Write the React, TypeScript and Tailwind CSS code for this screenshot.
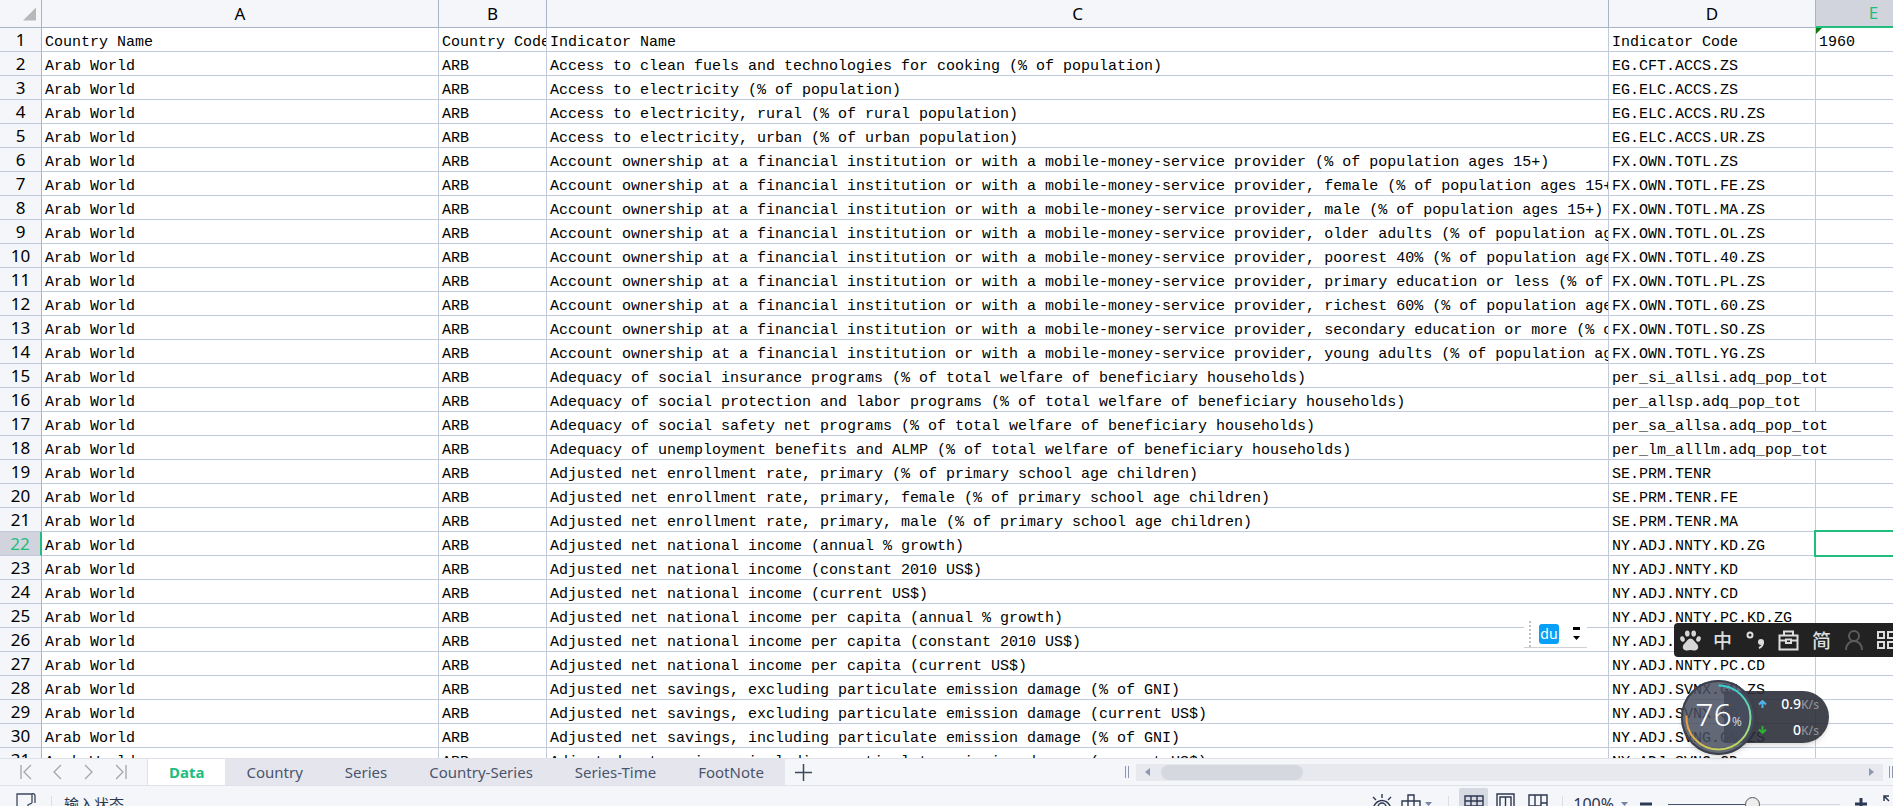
import { Fragment } from "react";

type Row = { name: string; code: string };

const rows: Row[] = [
  { name: "Access to clean fuels and technologies for cooking (% of population)", code: "EG.CFT.ACCS.ZS" },
  { name: "Access to electricity (% of population)", code: "EG.ELC.ACCS.ZS" },
  { name: "Access to electricity, rural (% of rural population)", code: "EG.ELC.ACCS.RU.ZS" },
  { name: "Access to electricity, urban (% of urban population)", code: "EG.ELC.ACCS.UR.ZS" },
  { name: "Account ownership at a financial institution or with a mobile-money-service provider (% of population ages 15+)", code: "FX.OWN.TOTL.ZS" },
  { name: "Account ownership at a financial institution or with a mobile-money-service provider, female (% of population ages 15+)", code: "FX.OWN.TOTL.FE.ZS" },
  { name: "Account ownership at a financial institution or with a mobile-money-service provider, male (% of population ages 15+)", code: "FX.OWN.TOTL.MA.ZS" },
  { name: "Account ownership at a financial institution or with a mobile-money-service provider, older adults (% of population ages 25+)", code: "FX.OWN.TOTL.OL.ZS" },
  { name: "Account ownership at a financial institution or with a mobile-money-service provider, poorest 40% (% of population ages 15+)", code: "FX.OWN.TOTL.40.ZS" },
  { name: "Account ownership at a financial institution or with a mobile-money-service provider, primary education or less (% of population ages 15+)", code: "FX.OWN.TOTL.PL.ZS" },
  { name: "Account ownership at a financial institution or with a mobile-money-service provider, richest 60% (% of population ages 15+)", code: "FX.OWN.TOTL.60.ZS" },
  { name: "Account ownership at a financial institution or with a mobile-money-service provider, secondary education or more (% of population ages 15+)", code: "FX.OWN.TOTL.SO.ZS" },
  { name: "Account ownership at a financial institution or with a mobile-money-service provider, young adults (% of population ages 15-24)", code: "FX.OWN.TOTL.YG.ZS" },
  { name: "Adequacy of social insurance programs (% of total welfare of beneficiary households)", code: "per_si_allsi.adq_pop_tot" },
  { name: "Adequacy of social protection and labor programs (% of total welfare of beneficiary households)", code: "per_allsp.adq_pop_tot" },
  { name: "Adequacy of social safety net programs (% of total welfare of beneficiary households)", code: "per_sa_allsa.adq_pop_tot" },
  { name: "Adequacy of unemployment benefits and ALMP (% of total welfare of beneficiary households)", code: "per_lm_alllm.adq_pop_tot" },
  { name: "Adjusted net enrollment rate, primary (% of primary school age children)", code: "SE.PRM.TENR" },
  { name: "Adjusted net enrollment rate, primary, female (% of primary school age children)", code: "SE.PRM.TENR.FE" },
  { name: "Adjusted net enrollment rate, primary, male (% of primary school age children)", code: "SE.PRM.TENR.MA" },
  { name: "Adjusted net national income (annual % growth)", code: "NY.ADJ.NNTY.KD.ZG" },
  { name: "Adjusted net national income (constant 2010 US$)", code: "NY.ADJ.NNTY.KD" },
  { name: "Adjusted net national income (current US$)", code: "NY.ADJ.NNTY.CD" },
  { name: "Adjusted net national income per capita (annual % growth)", code: "NY.ADJ.NNTY.PC.KD.ZG" },
  { name: "Adjusted net national income per capita (constant 2010 US$)", code: "NY.ADJ.NNTY.PC.KD" },
  { name: "Adjusted net national income per capita (current US$)", code: "NY.ADJ.NNTY.PC.CD" },
  { name: "Adjusted net savings, excluding particulate emission damage (% of GNI)", code: "NY.ADJ.SVNX.GN.ZS" },
  { name: "Adjusted net savings, excluding particulate emission damage (current US$)", code: "NY.ADJ.SVNX.CD" },
  { name: "Adjusted net savings, including particulate emission damage (% of GNI)", code: "NY.ADJ.SVNG.GN.ZS" },
  { name: "Adjusted net savings, including particulate emission damage (current US$)", code: "NY.ADJ.SVNG.CD" },
];

const sheets = ["Data", "Country", "Series", "Country-Series", "Series-Time", "FootNote"];

const ACTIVE_ROW = 22;

const cell = "h-6 overflow-hidden whitespace-pre border-r border-b border-[#c3c9dc] p-0 pt-[6px] pl-[3px] text-left align-top font-normal leading-[17px]";

function ColumnHead({ letter, active }: { letter: string; active?: boolean }) {
  return (
    <th
      scope="col"
      className={
        active
          ? "h-7 border-b-2 border-[#21bd7e] bg-[#d1d4dd] p-0 text-center text-[17px] leading-6 font-normal text-[#21bd7e]"
          : "h-7 border-r border-b border-[#a9b3c9] p-0 text-center text-[17px] leading-6 font-normal"
      }
    >
      {letter}
    </th>
  );
}

function RowHead({ n }: { n: number }) {
  return (
    <th
      scope="row"
      className={
        n === ACTIVE_ROW
          ? "h-6 border-r-2 border-b border-r-[#21bd7e] border-b-[#c3c9dc] bg-[#d1d4dd] p-0 text-center align-top font-['Noto_Sans'] text-[17px] leading-[23px] font-normal text-[#21bd7e]"
          : "h-6 border-r border-b border-r-[#a9b3c9] border-b-[#c3c9dc] bg-[#f5f6f9] p-0 text-center align-top font-['Noto_Sans'] text-[17px] leading-[23px] font-normal"
      }
    >
      {n}
    </th>
  );
}

function Sheet() {
  return (
    <table className="w-[1931px] table-fixed border-separate border-spacing-0 font-['Liberation_Mono',monospace] text-[15px] text-black">
      <colgroup>
        <col className="w-[42px]" />
        <col className="w-[397px]" />
        <col className="w-[108px]" />
        <col className="w-[1062px]" />
        <col className="w-[207px]" />
        <col className="w-[115px]" />
      </colgroup>
      <thead className="bg-[#f5f6f9] font-['Noto_Sans',sans-serif]">
        <tr>
          <th className="h-7 border-r border-b border-[#a9b3c9] p-0">
            <button type="button" aria-label="Select all" className="flex w-full justify-end pr-[5px]">
              <svg width="13" height="14" viewBox="0 0 14 14">
                <path d="M14 0V14H0Z" fill="#b8b8b8" />
              </svg>
            </button>
          </th>
          <ColumnHead letter="A" />
          <ColumnHead letter="B" />
          <ColumnHead letter="C" />
          <ColumnHead letter="D" />
          <ColumnHead letter="E" active />
        </tr>
      </thead>
      <tbody>
        <tr>
          <RowHead n={1} />
          <td className={cell}>Country Name</td>
          <td className={cell}>Country Code</td>
          <td className={cell}>Indicator Name</td>
          <td className={cell}>Indicator Code</td>
          <td className={`${cell} relative`}>
            <svg className="absolute top-0 left-0" width="6" height="6" viewBox="0 0 6 6">
              <path d="M0 0H6L0 6Z" fill="#0a7d0a" />
            </svg>
            1960
          </td>
        </tr>
        {rows.map((row, i) => {
          const n = i + 2;
          // long codes run over into the empty cell on their right
          const spills = row.code.length > 22;
          return (
            <tr key={row.name}>
              <RowHead n={n} />
              <td className={cell}>Arab World</td>
              <td className={cell}>ARB</td>
              <td className={cell}>{row.name}</td>
              {spills ? (
                <td colSpan={2} className={cell}>{row.code}</td>
              ) : (
                <Fragment>
                  <td className={cell}>{row.code}</td>
                  <td className={`${cell} relative overflow-visible`}>
                    {n === ACTIVE_ROW && (
                      <div className="absolute -top-[2px] -right-px -bottom-[2px] -left-[2px] border-2 border-[#21bd7e]" />
                    )}
                  </td>
                </Fragment>
              )}
            </tr>
          );
        })}
      </tbody>
    </table>
  );
}

const navPaths = [
  { label: "First sheet", d: "M1 1V15M11 1L4 8L11 15" },
  { label: "Previous sheet", d: "M9 1L2 8L9 15" },
  { label: "Next sheet", d: "M1 1L8 8L1 15" },
  { label: "Last sheet", d: "M0 1L7 8L0 15M10 1V15" },
];

function TabBar() {
  return (
    <div className="flex h-7 shrink-0 border-t border-b border-[#e0e2e9] bg-[#f5f6f9] font-['Noto_Sans',sans-serif] text-[15px] text-[#4a546c]">
      <nav className="flex w-[148px] shrink-0 items-center gap-5 border-r border-[#e0e2e9] pl-5">
        {navPaths.map((p) => (
          <button key={p.label} type="button" aria-label={p.label}>
            <svg width="12" height="16" viewBox="0 0 12 16" fill="none" stroke="#a3a5aa" strokeWidth="1.3">
              <path d={p.d} />
            </svg>
          </button>
        ))}
      </nav>
      {sheets.map((s) => (
        <button
          key={s}
          type="button"
          className={
            s === "Data"
              ? "bg-white px-[21px] font-bold text-[#21bd7e]"
              : "bg-[#e5e6ed] px-[21px]"
          }
        >
          {s}
        </button>
      ))}
      <button type="button" aria-label="Add sheet" className="px-[10px]">
        <svg width="17" height="17" viewBox="0 0 17 17" stroke="#3d475e" strokeWidth="1.5">
          <path d="M8.5 0V17M0 8.5H17" />
        </svg>
      </button>
      <div className="ml-auto flex w-[768px] shrink-0 items-center">
        <Grip />
        <div className="ml-[7px] flex h-[17px] flex-1 items-center bg-[#e8e9ef]">
          <button type="button" aria-label="Scroll left" className="pl-[9px]">
            <svg width="5" height="8" viewBox="0 0 5 8"><path d="M5 0V8L0 4Z" fill="#8d98b3" /></svg>
          </button>
          <div className="ml-[11px] h-[15px] w-[142px] rounded-full bg-[#d6d8e0]" />
          <button type="button" aria-label="Scroll right" className="ml-auto pr-[9px]">
            <svg width="5" height="8" viewBox="0 0 5 8"><path d="M0 0V8L5 4Z" fill="#8d98b3" /></svg>
          </button>
        </div>
        <div className="ml-[6px]">
          <Grip />
        </div>
      </div>
    </div>
  );
}

function Grip() {
  return <div className="h-3 w-1 border-x border-[#8d98b3]" />;
}

function Caret() {
  return (
    <svg width="7" height="4" viewBox="0 0 7 4"><path d="M0 0H7L3.5 4Z" fill="#7683a3" /></svg>
  );
}

function StatusBar() {
  return (
    <footer className="h-5 shrink-0 overflow-hidden bg-[#f5f6f9]">
      <div className="flex h-9 items-center text-[#2d3750]">
        <svg className="ml-4" width="20" height="22" viewBox="0 0 20 22" fill="none" stroke="#3d475e" strokeWidth="1.3">
          <path d="M10 15H1V1H16M16 10V1C17 0 19 1 19 3V10M12 16V12L16 10" />
        </svg>
        <div className="ml-[15px] h-4 w-px bg-[#dcdee5]" />
        <span className="ml-3 font-['Noto_Sans_CJK_SC',sans-serif] text-[15px] leading-5">输入状态</span>
        <div className="ml-auto flex items-center">
          <button type="button" aria-label="Eye protection">
            <svg width="20" height="20" viewBox="0 0 20 20" fill="none" stroke="#2d3750" strokeWidth="1.4">
              <path d="M1 14C5 4 15 4 19 14C15 20 5 20 1 14ZM10 4V0M4 6L1 3M16 6L19 3" />
              <circle cx="10" cy="13" r="4" />
            </svg>
          </button>
          <button type="button" aria-label="Reading mode" className="ml-[9px] flex items-center gap-1">
            <svg width="20" height="20" viewBox="0 0 20 20" fill="none" stroke="#2d3750" strokeWidth="1.4">
              <path d="M7 1H13V18H7ZM1 7H19V13H1Z" />
            </svg>
            <Caret />
          </button>
          <div className="ml-4 h-4 w-px bg-[#dcdee5]" />
          <button type="button" aria-label="Normal view" className="ml-[10px] flex h-8 w-[29px] items-center justify-center rounded-xs bg-[#d7dae3]">
            <svg width="20" height="18" viewBox="0 0 20 18" fill="none" stroke="#2d3750" strokeWidth="1.4">
              <path d="M1 1H19V17H1ZM1 6H19M1 11H19M7 1V17M13 1V17" />
            </svg>
          </button>
          <button type="button" aria-label="Page layout" className="ml-2">
            <svg width="19" height="22" viewBox="0 0 19 22" fill="none" stroke="#2d3750" strokeWidth="1.4">
              <path d="M1 21V1H18V21ZM4 21V4H15V21M9.5 4V21" />
            </svg>
          </button>
          <button type="button" aria-label="Page break preview" className="ml-[13px]">
            <svg width="20" height="20" viewBox="0 0 20 20" fill="none" stroke="#2d3750" strokeWidth="1.4">
              <path d="M1 19V1H19V19ZM7 1V12M13 1V12M1 12H13M13 9H19" />
            </svg>
          </button>
          <div className="ml-[14px] h-4 w-px bg-[#dcdee5]" />
          <button type="button" className="ml-[10px] flex items-center gap-[7px] font-['Noto_Sans',sans-serif] text-[16px] leading-5">
            100%
            <Caret />
          </button>
          <button type="button" aria-label="Zoom out" className="ml-3">
            <svg width="12" height="12" viewBox="0 0 12 12" stroke="#2d3a57" strokeWidth="3"><path d="M0 6H12" /></svg>
          </button>
          <input
            type="range"
            aria-label="Zoom"
            defaultValue={49}
            className="ml-4 h-[15px] w-[172px] appearance-none bg-[linear-gradient(#46536e,#46536e),linear-gradient(#d3d6de,#d3d6de)] bg-[length:50%_1px,100%_1px] bg-[position:left_center,center] bg-no-repeat [&::-webkit-slider-thumb]:size-[15px] [&::-webkit-slider-thumb]:appearance-none [&::-webkit-slider-thumb]:rounded-full [&::-webkit-slider-thumb]:border [&::-webkit-slider-thumb]:border-[#555] [&::-webkit-slider-thumb]:bg-[#eeeeee]"
          />
          <button type="button" aria-label="Zoom in" className="ml-[15px]">
            <svg width="12" height="12" viewBox="0 0 12 12" stroke="#2d3a57" strokeWidth="3"><path d="M0 6H12M6 0V12" /></svg>
          </button>
          <button type="button" aria-label="Full screen" className="-mr-2 ml-4">
            <svg width="18" height="18" viewBox="0 0 18 18" fill="none" stroke="#2d3750" strokeWidth="1.5">
              <path d="M1 6V1H6M1 1L6 6M12 1H17V6M1 12V17H6M17 12V17H12M1 17L6 12" />
            </svg>
          </button>
        </div>
      </div>
    </footer>
  );
}

function ImeBar() {
  return (
    <div className="absolute top-[623px] right-0 flex h-[34px] w-[219px] items-center overflow-hidden rounded-l-sm bg-[#222222] pl-[6px] font-['Noto_Sans_CJK_SC',sans-serif] text-[19px] leading-6 font-medium text-[#dddddd]">
      <svg className="shrink-0" width="21" height="21" viewBox="0 0 21 21" fill="#d6d6d6">
        <ellipse cx="2.5" cy="9" rx="2.2" ry="2.8" transform="rotate(-20 2.5 9)" />
        <ellipse cx="7.3" cy="3.5" rx="2.3" ry="3.1" />
        <ellipse cx="13.7" cy="3.5" rx="2.3" ry="3.1" />
        <ellipse cx="18.5" cy="9" rx="2.2" ry="2.8" transform="rotate(20 18.5 9)" />
        <path d="M10.500 8.500C13 8.500 14 11 16 13C20 16.500 18 21 14 20.500C12 19.800 9 19.800 7 20.500C3 21 1 16.500 5 13C7 11 8 8.500 10.500 8.500Z" />
      </svg>
      <span className="ml-3">中</span>
      <svg className="ml-[14px] shrink-0" width="19" height="20" viewBox="0 0 19 20" fill="none" stroke="#dddddd" strokeWidth="2">
        <circle cx="4" cy="5" r="2.500" />
        <circle cx="15" cy="12" r="3" fill="#dddddd" stroke="none" />
        <path d="M17 12C17 15 15.500 17 13 18" />
      </svg>
      <svg className="ml-[13px] shrink-0" width="21" height="21" viewBox="0 0 21 21" fill="none" stroke="#dddddd" strokeWidth="2">
        <path d="M1.500 5.500H19.500V19.500H1.500ZM6 5V1.500H15V5M1.500 10.500H8M13 10.500H19.500M8 9.500H13V13H8Z" />
      </svg>
      <span className="ml-[13px]">简</span>
      <svg className="ml-[14px] shrink-0" width="18" height="20" viewBox="0 0 18 20" fill="none" stroke="#5c5c5c" strokeWidth="2">
        <circle cx="9" cy="6" r="5" />
        <path d="M1 20C1 14 5 11 9 11C13 11 17 14 17 20" />
      </svg>
      <svg className="ml-[13px] shrink-0" width="20" height="20" viewBox="0 0 20 20" fill="none" stroke="#dddddd" strokeWidth="2">
        <path d="M2 2H8V8H2ZM12 2H18V8H12ZM2 12H8V18H2ZM12 12H18V18H12Z" />
      </svg>
    </div>
  );
}

function DuBar() {
  return (
    <div className="absolute top-[620px] right-[306px] flex h-7 w-[63px] items-center border-b border-[#d0d0d0] bg-white pl-[5px]">
      <div className="h-[26px] border-l-2 border-dotted border-[#c0c0c0]" />
      <button type="button" className="ml-2 h-5 w-5 rounded-[3px] bg-[#06a0f8] font-['Noto_Sans',sans-serif] text-[14px] leading-5 text-white">
        du
      </button>
      <svg className="ml-[14px]" width="7" height="13" viewBox="0 0 7 13" fill="#000">
        <path d="M0 0H7V3H0ZM0 9H7L3.500 13Z" />
      </svg>
    </div>
  );
}

function SpeedBall() {
  return (
    <div className="absolute top-[680px] right-[64px] flex h-[75px] w-[148px] items-center font-['Noto_Sans',sans-serif]">
      <div className="absolute top-[11px] right-0 flex h-[52px] w-[105px] flex-col justify-around rounded-r-full bg-[#2c2f3a]/90 pr-[10px] pl-[34px] text-[14px] leading-5 text-white shadow-md">
        <div className="flex items-center">
          <svg width="9" height="8" viewBox="0 0 9 8" fill="none" stroke="#4fb4ee" strokeWidth="2"><path d="M4.500 8V1M1 4.500L4.500 1L8 4.500" /></svg>
          <span className="ml-auto font-medium">0.9<span className="text-[12px] text-[#8e9099]">K/s</span></span>
        </div>
        <div className="flex items-center">
          <svg width="9" height="8" viewBox="0 0 9 8" fill="none" stroke="#2fb135" strokeWidth="2"><path d="M4.500 0V7M1 3.500L4.500 7L8 3.500" /></svg>
          <span className="ml-auto font-medium">0<span className="text-[12px] text-[#8e9099]">K/s</span></span>
        </div>
      </div>
      <div className="relative flex size-[75px] items-center justify-center rounded-full bg-[#484d5e]/85 text-white shadow-md">
        <svg className="absolute inset-0" width="75" height="75" viewBox="0 0 75 75" fill="none" strokeWidth="2">
          <defs>
            <linearGradient id="ringRight" x1="0" y1="0" x2="0" y2="1">
              <stop offset="0" stopColor="#36cfd6" />
              <stop offset="0.5" stopColor="#7fdc9c" />
              <stop offset="1" stopColor="#c9d657" />
            </linearGradient>
            <linearGradient id="ringLeft" x1="0" y1="0" x2="1" y2="1">
              <stop offset="0" stopColor="#ee9443" />
              <stop offset="1" stopColor="#c9d657" />
            </linearGradient>
          </defs>
          <circle cx="37.500" cy="37.500" r="36.500" stroke="#3c404d" />
          <path d="M37.500 5.500A32 32 0 0 1 37.500 69.500" stroke="url(#ringRight)" />
          <path d="M37.500 69.500A32 32 0 0 1 5.500 35.500" stroke="url(#ringLeft)" />
        </svg>
        <span className="relative text-[32px] leading-8 font-light">76<span className="text-[12px]">%</span></span>
      </div>
    </div>
  );
}

export default function App() {
  return (
    <div className="relative flex h-screen flex-col overflow-hidden bg-white">
      <main className="min-h-0 flex-1 overflow-hidden">
        <Sheet />
      </main>
      <TabBar />
      <StatusBar />
      <DuBar />
      <ImeBar />
      <SpeedBall />
    </div>
  );
}
